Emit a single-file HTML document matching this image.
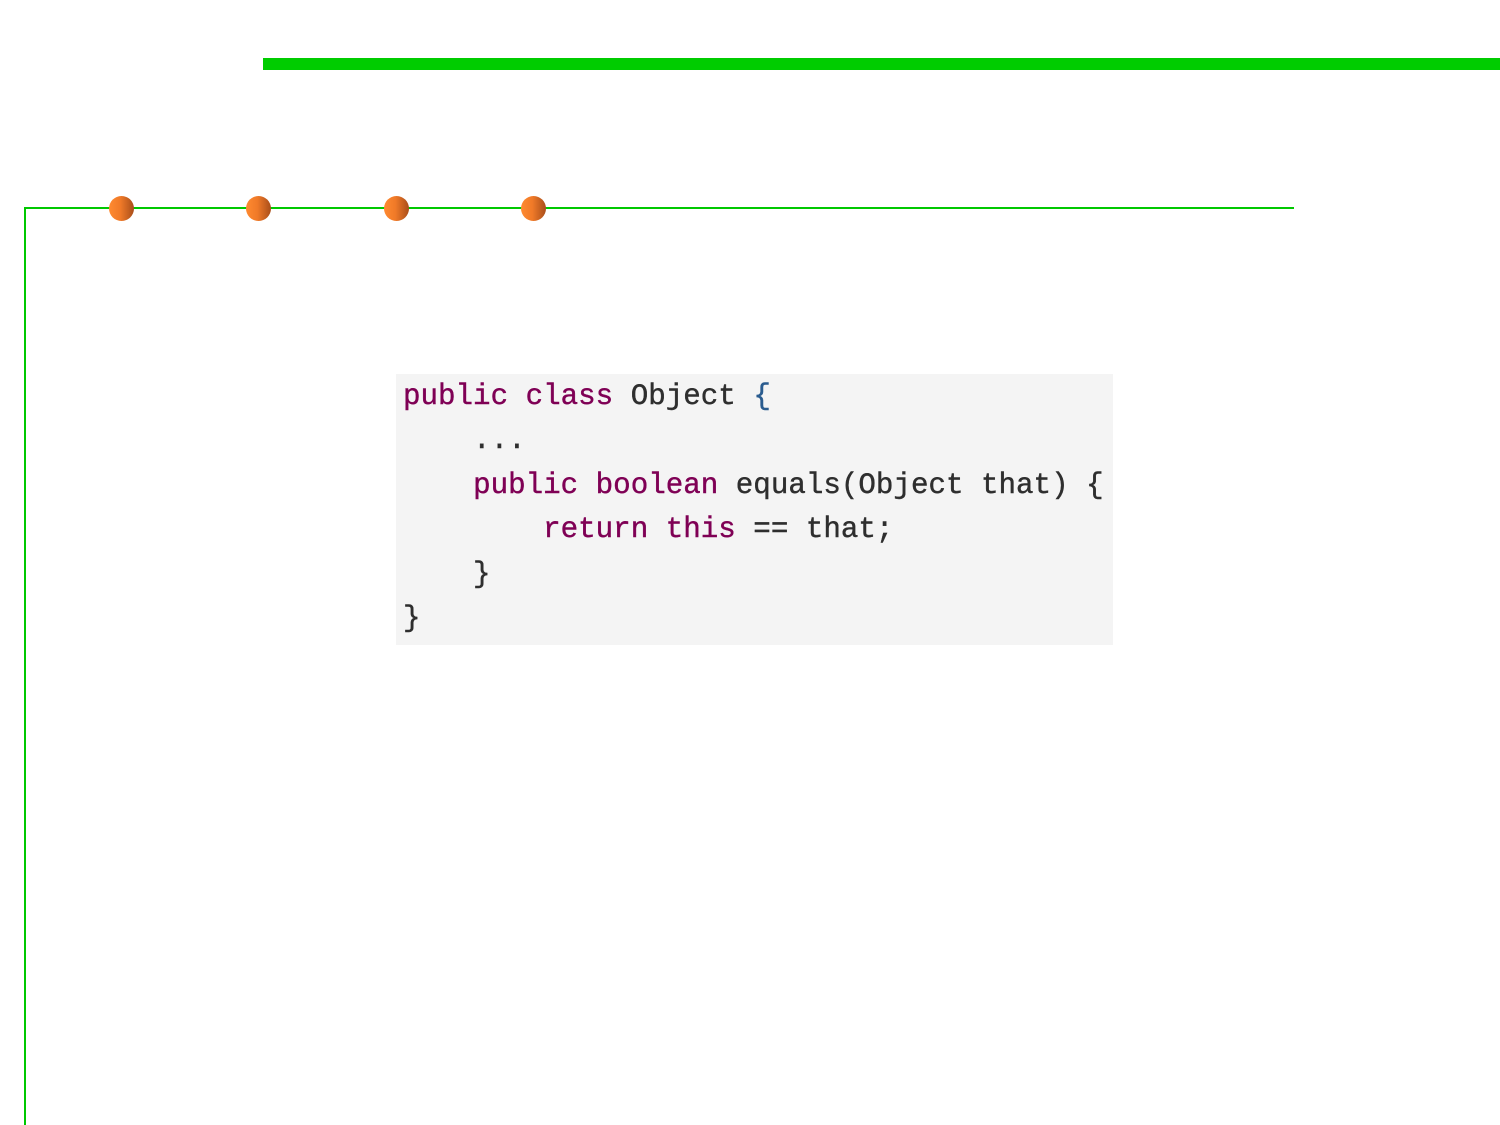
<!DOCTYPE html>
<html><head><meta charset="utf-8"><style>
html,body{margin:0;padding:0;background:#fff;width:1500px;height:1125px;overflow:hidden;position:relative}
.bar{position:absolute;left:263px;top:58px;width:1237px;height:12px;background:#00cc00}
.h{position:absolute;left:24px;top:207px;width:1270px;height:2px;background:#00c800}
.v{position:absolute;left:24px;top:207px;width:2px;height:918px;background:#00c800}
.dot{position:absolute;top:196px;width:25px;height:25px;border-radius:50%;background:linear-gradient(90deg,#ff8a30 0%,#f07a28 45%,#a94e1a 100%)}
.code{position:absolute;left:396px;top:374px;width:717px;height:271px;background:#f4f4f4}
pre{margin:0;position:absolute;left:403px;top:375px;font-family:"Liberation Mono",monospace;font-size:29.2px;line-height:44.4px;color:#2e2e2e;-webkit-text-stroke:0.4px currentColor}
.k{color:#7f0055}
.b{color:#2a5c8f}
</style></head><body>
<div class="bar"></div>
<div class="h"></div><div class="v"></div>
<div class="dot" style="left:109px"></div>
<div class="dot" style="left:246px"></div>
<div class="dot" style="left:384px"></div>
<div class="dot" style="left:521px"></div>
<div class="code"></div>
<pre><span class="k">public</span> <span class="k">class</span> Object <span class="b">{</span>
    ...
    <span class="k">public</span> <span class="k">boolean</span> equals(Object that) {
        <span class="k">return</span> <span class="k">this</span> == that;
    }
}</pre>
</body></html>
